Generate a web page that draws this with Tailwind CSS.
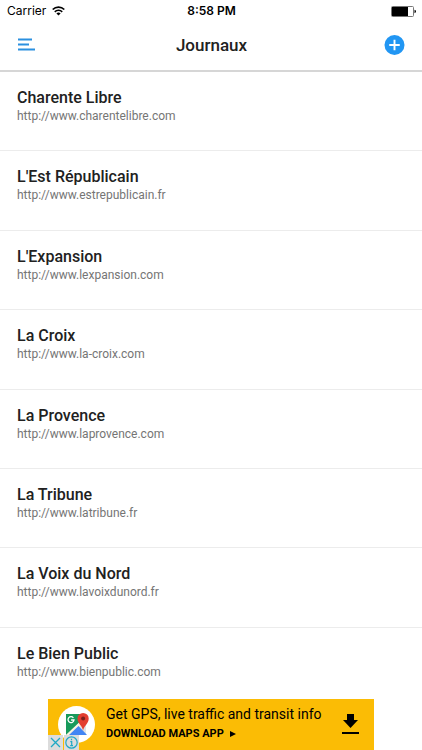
<!DOCTYPE html>
<html lang="fr">
<head>
<meta charset="utf-8">
<meta name="viewport" content="width=device-width, initial-scale=1">
<title>Journaux</title>
<script src="https://cdn.jsdelivr.net/npm/@tailwindcss/browser@4"></script>
</head>
<body class="flex min-h-screen flex-col bg-white font-['Roboto',sans-serif] text-[#212121]">
  <div class="grid h-5 grid-cols-3 items-center pr-1.5 pl-[7px] pt-px font-['Inter',sans-serif] text-[12px] leading-5 text-black">
    <div class="flex items-center gap-1.5">
      <span>Carrier</span>
      <svg class="h-[10px] w-[13px]" viewBox="0 0 13 10" fill="none" stroke="#000" stroke-width="1.7" aria-hidden="true">
        <path d="M.7 3.5a8.2 8.2 0 0 1 11.6 0M2.8 5.8a5.2 5.2 0 0 1 7.4 0"/>
        <path d="M6.5 9.6 4.4 7.5a3 3 0 0 1 4.2 0z" fill="#000" stroke="none"/>
      </svg>
    </div>
    <span class="text-center font-semibold">8:58 PM</span>
    <svg class="h-[11px] w-[25px] justify-self-end" viewBox="0 0 25 11" aria-hidden="true">
      <rect x=".5" y=".5" width="22" height="10" rx="1" fill="#fff" stroke="#777"/>
      <rect x="1" y="1" width="16" height="9" fill="#000"/>
      <path d="M23.5 3.8q1.5.3 1.5 1.7t-1.5 1.7z" fill="#000"/>
    </svg>
  </div>
  <header class="flex h-[52px] items-center justify-between border-b-2 border-[#d6d6d6] pr-[17px] pl-[18px]">
    <button type="button" aria-label="Menu" class="flex size-6 items-center justify-start">
      <svg class="h-[14px] w-[18px]" viewBox="0 0 18 14" fill="none" stroke="#2b90e0" stroke-width="2" aria-hidden="true">
        <path d="M0 1.500h14M0 6.500h11M0 11.500h17"/>
      </svg>
    </button>
    <h1 class="text-[17px] leading-6 font-medium">Journaux</h1>
    <button type="button" aria-label="Ajouter" class="flex size-6 items-center justify-end">
      <svg class="size-[21px]" viewBox="0 0 22 22" aria-hidden="true">
        <circle cx="11" cy="10.500" r="10.500" fill="#2196f3"/>
        <path d="M11 5v11M5.500 10.500h11" stroke="#fff" stroke-width="2"/>
      </svg>
    </button>
  </header>
  <ul class="grid flex-1 auto-rows-fr divide-y divide-[#ececec]">
    <li class="px-[17px] pt-4"><a href="#" class="block"><span class="block text-[16px] leading-5 font-medium">Charente Libre</span><span class="block text-[12px] leading-4 text-[#757575]">http://www.charentelibre.com</span></a></li>
    <li class="px-[17px] pt-4"><a href="#" class="block"><span class="block text-[16px] leading-5 font-medium">L'Est Républicain</span><span class="block text-[12px] leading-4 text-[#757575]">http://www.estrepublicain.fr</span></a></li>
    <li class="px-[17px] pt-4"><a href="#" class="block"><span class="block text-[16px] leading-5 font-medium">L'Expansion</span><span class="block text-[12px] leading-4 text-[#757575]">http://www.lexpansion.com</span></a></li>
    <li class="px-[17px] pt-4"><a href="#" class="block"><span class="block text-[16px] leading-5 font-medium">La Croix</span><span class="block text-[12px] leading-4 text-[#757575]">http://www.la-croix.com</span></a></li>
    <li class="px-[17px] pt-4"><a href="#" class="block"><span class="block text-[16px] leading-5 font-medium">La Provence</span><span class="block text-[12px] leading-4 text-[#757575]">http://www.laprovence.com</span></a></li>
    <li class="px-[17px] pt-4"><a href="#" class="block"><span class="block text-[16px] leading-5 font-medium">La Tribune</span><span class="block text-[12px] leading-4 text-[#757575]">http://www.latribune.fr</span></a></li>
    <li class="px-[17px] pt-4"><a href="#" class="block"><span class="block text-[16px] leading-5 font-medium">La Voix du Nord</span><span class="block text-[12px] leading-4 text-[#757575]">http://www.lavoixdunord.fr</span></a></li>
    <li class="px-[17px] pt-4"><a href="#" class="block"><span class="block text-[16px] leading-5 font-medium">Le Bien Public</span><span class="block text-[12px] leading-4 text-[#757575]">http://www.bienpublic.com</span></a></li>
  </ul>
  <footer class="sticky bottom-0 -mt-2 flex justify-center">
    <div class="relative flex h-[51px] w-full max-w-[326px] items-center bg-[#fbbc05] pr-[14px] pb-px pl-[10px]">
      <a href="#" class="flex flex-1 items-center gap-[11px] text-black">
        <svg class="size-[37px]" viewBox="0 0 37 37" aria-hidden="true">
          <circle cx="18.5" cy="18.5" r="18.5" fill="#fff"/>
          <path d="M8 8h16v9L10 29H8z" fill="#179a5b"/>
          <path d="M8 29 28 10v19z" fill="#dfe3e6"/>
          <path d="m8 29 17-16 3 2-15 14z" fill="#f8f2df"/>
          <path d="m11 29 9.500-9L29 29z" fill="#4285f4"/>
          <path d="M25 25c0-5-5.500-7-5.500-12.500a5.600 5.600 0 0 1 11.200 0C30.700 18 25.500 20 25 25z" fill="#e33e30"/>
          <circle cx="25.100" cy="12.500" r="2" fill="#7b211d"/>
          <path d="M15.400 11.800a3 3 0 1 0 .6 2.200h-2.900" fill="none" stroke="#fff" stroke-width="1.300"/>
        </svg>
        <span class="flex-1">
          <span class="block text-[14px] leading-5">Get GPS, live traffic and transit info</span>
          <span class="flex items-center gap-[6px] text-[11px] leading-5 font-bold">DOWNLOAD MAPS APP
            <svg class="size-[6px]" viewBox="0 0 6 6" aria-hidden="true"><path d="M0 0l6 3-6 3z"/></svg>
          </span>
        </span>
        <svg class="h-5 w-[18px]" viewBox="0 0 18 20" aria-hidden="true"><path d="M5 0h7v6h4l-7.500 8L1 6h4zM0 18h17v2H0z"/></svg>
      </a>
      <div class="absolute bottom-0 left-0 flex gap-px">
        <button type="button" aria-label="Fermer" class="flex size-[15px] items-center justify-center bg-[#dcdcdc]">
          <svg class="size-[11px]" viewBox="0 0 11 11" fill="none" stroke="#20a8c4" stroke-width="1.300" aria-hidden="true"><path d="m1 1 9 9M10 1l-9 9"/></svg>
        </button>
        <button type="button" aria-label="Informations" class="flex size-[15px] items-center justify-center bg-[#dcdcdc]">
          <svg class="size-[13px]" viewBox="0 0 13 13" fill="none" stroke="#20a8c4" stroke-width="1.200" aria-hidden="true"><circle cx="6.500" cy="6.500" r="5.700"/><path d="M6.500 2.700v1.500M5.300 5.600h1.400v4M5.200 9.600h2.800"/></svg>
        </button>
      </div>
    </div>
  </footer>
</body>
</html>
